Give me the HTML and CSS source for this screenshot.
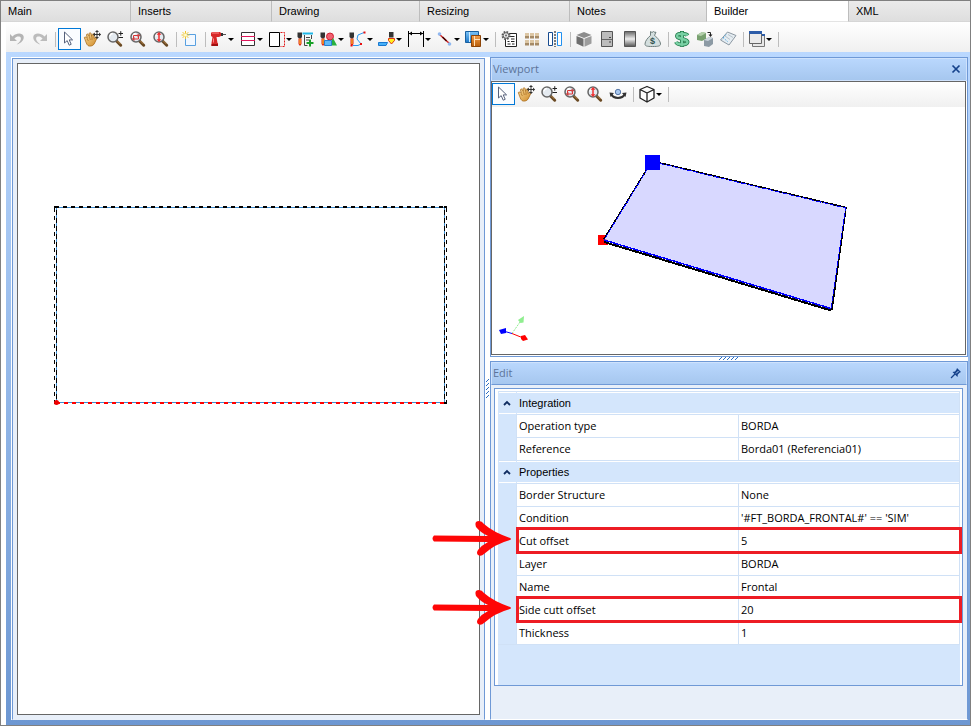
FILE: index.html
```html
<!DOCTYPE html>
<html lang="en">
<head>
<meta charset="utf-8">
<title>Builder</title>
<link rel="stylesheet" href="styles.css">
</head>
<body>
<svg class="defs" aria-hidden="true">
  <defs>
    <linearGradient id="steel" x1="0" y1="0" x2="0" y2="1"><stop offset="0" stop-color="#666"/><stop offset=".5" stop-color="#eee"/><stop offset="1" stop-color="#555"/></linearGradient>
    <linearGradient id="skin" x1="0" y1="0" x2="1" y2="1"><stop offset="0" stop-color="#f8dc9c"/><stop offset="1" stop-color="#d08a28"/></linearGradient>
    <linearGradient id="sky" x1="0" y1="0" x2="0" y2="1"><stop offset="0" stop-color="#7cc4f8"/><stop offset="1" stop-color="#1e78c8"/></linearGradient>
    <linearGradient id="amber" x1="0" y1="0" x2="0" y2="1"><stop offset="0" stop-color="#f4a04c"/><stop offset="1" stop-color="#b85c08"/></linearGradient>
  </defs>
  <symbol id="i-cursor" viewBox="0 0 20 20"><path d="M5.500 3v11l2.700-2.400 2 4.600 2-.9-2-4.400h3.400z" fill="#fff" stroke="#56617c"/></symbol>
  <symbol id="i-hand" viewBox="0 0 20 20"><path d="M2.300 8.500c.8-1 2-.3 3 .9L4.500 6c0-1.300 1.500-1.400 2 0l.8 1.500-.2-2.900c.2-1.200 1.700-1.100 2 0l.6 3 .6-2.200c.5-1 1.800-.8 1.800.4l-.1 3.700 1.500-1.300c1-.6 1.900.3 1.300 1.200l-2.100 4.500c-.9 2.200-2.800 3.300-5 3.200-2.800-.2-3.300-2.700-5.400-8.600z" fill="url(#skin)" stroke="#a86c1c" stroke-width=".8"/><path d="M5 10l1.500 2M7.500 8l.8 3M10 8v3" stroke="#a86c1c" stroke-width=".7"/><path d="M15 2v7M11.500 5.500h7" stroke="#333"/><path d="M15 1l2 2h-4zM15 10l2-2h-4zM19 5.500l-2-2v4zM11 5.500l2-2v4z" fill="#333"/></symbol>
  <symbol id="i-lens" viewBox="0 0 20 20"><path d="M11.500 12l4.200 4.200" stroke="#6a4a24" stroke-width="3" stroke-linecap="round"/><path d="M12.500 12l3 3" stroke="#b98a50"/><circle cx="8" cy="8" r="5" fill="#e4eaf0" stroke="#666" stroke-width="1.500"/><path d="M4.800 7.500a3.400 3.400 0 0 1 3-3" fill="none" stroke="#fff" stroke-width="1.300"/></symbol>
  <symbol id="i-zoom" viewBox="0 0 20 20"><use href="#i-lens"/><path d="M13.500 4.500h4.500M15.750 2.200v4.500M13.500 8.500h4.500" stroke="#222"/></symbol>
  <symbol id="i-zoomwin" viewBox="0 0 20 20"><use href="#i-lens"/><path d="M5.500 6.500h5v3.500h-5z" fill="none" stroke="#d33"/><path d="M3.500 10l3-2v4zM12.500 6.500l-3-2v4z" fill="#c44"/></symbol>
  <symbol id="i-zoomfit" viewBox="0 0 20 20"><use href="#i-lens"/><path d="M8 4v8" stroke="#f03030" stroke-width="1.500"/><path d="M8 3l2.500 2.700h-5zM8 13l2.500-2.700h-5z" fill="#f03030"/></symbol>
  <symbol id="i-bit" viewBox="0 0 20 20"><path d="M1.500 3.500H6V8L5 9.500H3L1.500 8z" fill="#333"/><path d="M2.500 9.500h3v5.500l-1.500 2-1.500-2z" fill="#e02010"/><path d="M3.500 10h1v5h-1z" fill="#ffe030"/></symbol>
</svg>

<div class="window">
  <nav class="tabs" aria-label="Sections">
    <button class="tab" type="button">Main</button>
    <button class="tab" type="button">Inserts</button>
    <button class="tab" type="button">Drawing</button>
    <button class="tab" type="button">Resizing</button>
    <button class="tab" type="button">Notes</button>
    <button class="tab tab-active" type="button" aria-current="page">Builder</button>
    <button class="tab" type="button">XML</button>
  </nav>

  <div class="toolbar" role="toolbar" aria-label="Builder tools">
    <button class="tool" type="button" aria-label="Undo"><svg class="icon" viewBox="0 0 20 20"><path d="M3 5v7h7l-2.600-2.500c2-2.500 5.600-2.600 6.400-.8.700 1.800-1 4.400-4.200 6.800 5-1.500 7.800-5 7-8.300C15.500 3.800 9.500 3.500 5.500 7.500z" fill="#b4b4b4"/></svg></button>
    <button class="tool" type="button" aria-label="Redo"><svg class="icon" viewBox="0 0 20 20"><path d="M17 5v7h-7l2.600-2.500c-2-2.500-5.600-2.600-6.400-.8-.7 1.800 1 4.400 4.200 6.800-5-1.500-7.800-5-7-8.300C4.500 3.800 10.500 3.500 14.500 7.500z" fill="#bcbcbc"/></svg></button>
    <span class="sep"></span>
    <button class="tool tool-on" type="button" aria-label="Select"><svg class="icon"><use href="#i-cursor"/></svg></button>
    <button class="tool" type="button" aria-label="Pan"><svg class="icon"><use href="#i-hand"/></svg></button>
    <button class="tool" type="button" aria-label="Zoom"><svg class="icon"><use href="#i-zoom"/></svg></button>
    <button class="tool" type="button" aria-label="Zoom window"><svg class="icon"><use href="#i-zoomwin"/></svg></button>
    <button class="tool" type="button" aria-label="Zoom to fit"><svg class="icon"><use href="#i-zoomfit"/></svg></button>
    <span class="sep"></span>
    <button class="tool" type="button" aria-label="New"><svg class="icon" viewBox="0 0 20 20"><path d="M5.500 5.500h10v11h-10z" fill="#f2f8ff" stroke="#58a0e0"/><path d="M5.500 2v8M1.500 6h8M2.700 3.200l5.600 5.600M8.300 3.200L2.700 8.800" stroke="#f0c428"/><circle cx="5.500" cy="6" r="1.500" fill="#fffbd0"/></svg></button>
    <span class="sep"></span>
    <button class="tool tool-drop" type="button" aria-label="Drill"><svg class="icon" viewBox="0 0 20 20"><path d="M2 4l1-1h8l1 1v3l-2 1H7.500l1 6H9v3H2.500v-3l1-6L2 7z" fill="#d62828"/><path d="M3 4h7M4.500 9.500v4" stroke="#f88"/><path d="M12 4h2v3h-2z" fill="#333"/><path d="M14 5.500h3" stroke="#555"/><path d="M2.500 15h6.500v2H2.500z" fill="#a01010"/></svg></button>
    <button class="tool tool-drop" type="button" aria-label="Panel"><svg class="icon" viewBox="0 0 20 20"><path d="M3.500 3.500h13v13h-13z" fill="#fff" stroke="#333"/><path d="M3 7.500h14M3 11.500h14" stroke="#e0185c"/></svg></button>
    <button class="tool tool-drop" type="button" aria-label="Edge"><svg class="icon" viewBox="0 0 20 20"><path d="M2.500 3.500h10v14h-10z" fill="#fff" stroke="#000"/><path d="M13.500 3.500h4v14h-4" fill="none" stroke="#e01818" stroke-dasharray="2 1"/></svg></button>
    <button class="tool" type="button" aria-label="Add operation"><svg class="icon" viewBox="0 0 20 20"><use href="#i-bit"/><path d="M6.500 4.500h10.500" stroke="#20b8e8" stroke-width="2"/><path d="M8.500 6v10.500h3M15.500 6v4M10 8.500h4M10 11h3" fill="none" stroke="#444"/><path d="M14 10.500v7M10.500 14h7" stroke="#18a028" stroke-width="2"/></svg></button>
    <button class="tool tool-drop" type="button" aria-label="Shapes"><svg class="icon" viewBox="0 0 20 20"><use href="#i-bit"/><circle cx="11" cy="7.500" r="3.500" fill="#f06070" stroke="#d02030"/><path d="M14 9l4 7.500H10z" fill="#28b040"/><path d="M5.500 11.500h7v5h-7z" fill="#60b8f8" stroke="#2880d0"/></svg></button>
    <button class="tool tool-drop" type="button" aria-label="Path"><svg class="icon" viewBox="0 0 20 20"><use href="#i-bit"/><path d="M5 16.500h5l3-1.500-4-5 1-4 6-2.500" fill="none" stroke="#2898f0"/><path d="M15.500 2.500h2v2h-2zM12 14h2v2h-2zM2.500 15.500h2v2h-2z" fill="#e81010"/></svg></button>
    <button class="tool tool-drop" type="button" aria-label="Groove"><svg class="icon" viewBox="0 0 20 20"><path d="M1.500 13.500h9l-1.500 3H1.500z" fill="#48b0f8" stroke="#1878d0"/><path d="M12 3h4.500v5.500H12z" fill="#333"/><path d="M11.500 9.500h6v2L14.500 15l-3-3.500z" fill="#fff020" stroke="#e03010"/></svg></button>
    <button class="tool tool-drop" type="button" aria-label="Dimension"><svg class="icon" viewBox="0 0 20 20"><path d="M2.500 2v16M17.500 2v16M3 4.500h14" stroke="#000"/><path d="M3 4.500l3-2v4zM17 4.500l-3-2v4z" fill="#000"/></svg></button>
    <button class="tool tool-drop" type="button" aria-label="Line"><svg class="icon" viewBox="0 0 20 20"><path d="M4 5l11 10" stroke="#d02020" stroke-width="1.400"/><path d="M7.500 8l4 4" stroke="#400" stroke-width="1.500"/><circle cx="4.500" cy="5" r="1.800" fill="#90b8f0"/><circle cx="14.500" cy="15" r="1.800" fill="#90b8f0"/></svg></button>
    <button class="tool tool-drop" type="button" aria-label="Modules"><svg class="icon" viewBox="0 0 20 20"><path d="M1.500 2.500h13v11h-13z" fill="url(#sky)" stroke="#1860a0"/><path d="M5.500 3v10" stroke="#d0ecff"/><path d="M7.500 6.500h9v11h-9z" fill="url(#amber)" stroke="#8c4408"/><path d="M10.500 7v10M11 10.500h5" stroke="#ffe0b8"/></svg></button>
    <span class="sep"></span>
    <button class="tool" type="button" aria-label="Settings list"><svg class="icon" viewBox="0 0 20 20"><path d="M6.500 4.500h11v13h-11z" fill="#fff" stroke="#222"/><path d="M10 7.500h5.500M8.500 12.500h2M12 12.500h3.500M8.500 15h3M13 15h2.500M12 10h3.500" stroke="#222"/><circle cx="7" cy="6.500" r="3.500" fill="#ddd" stroke="#555" stroke-width="2" stroke-dasharray="1.600 1.150"/><circle cx="7" cy="6.500" r="2.800" fill="#e8e8e8" stroke="#666"/><circle cx="7" cy="6.500" r="1" fill="#666"/></svg></button>
    <button class="tool" type="button" aria-label="Blocks"><svg class="icon" viewBox="0 0 20 20"><g fill="#dcc6a4"><path d="M3 4h4v5H3zM8 4h4v5H8zM13 4h4v5h-4zM3 11h4v5H3zM8 11h4v5H8zM13 11h4v5h-4z"/></g><g fill="#a58a66"><path d="M3 7h4v2.500H3zM8 7h4v2.500H8zM13 7h4v2.500h-4zM3 14h4v2.500H3zM8 14h4v2.500H8zM13 14h4v2.500h-4z"/></g></svg></button>
    <button class="tool" type="button" aria-label="Mirror"><svg class="icon" viewBox="0 0 20 20"><path d="M3.500 3.500h4v13h-4z" fill="#fff" stroke="#184c90"/><path d="M12.500 3.500h4v13h-4z" fill="#fff" stroke="#2090f0"/><path d="M10 2v16" stroke="#000" stroke-dasharray="2 1"/></svg></button>
    <span class="sep"></span>
    <button class="tool" type="button" aria-label="Box"><svg class="icon" viewBox="0 0 20 20"><path d="M10 3l7.500 3-7.500 3-7.500-3z" fill="#8c8c8c"/><path d="M2.500 7l7 2.800v8L2.500 14.500z" fill="#6e6e6e"/><path d="M17.500 7l-7 2.800v8l7-3.300z" fill="#9c9c9c"/></svg></button>
    <button class="tool" type="button" aria-label="Door"><svg class="icon" viewBox="0 0 20 20"><path d="M4.500 2.500h11v15h-11z" fill="#bcbcbc" stroke="#555"/><path d="M5 10.500h10" stroke="#666"/><path d="M12 8.500h2M12 13h2" stroke="#444"/></svg></button>
    <button class="tool" type="button" aria-label="Metal"><svg class="icon" viewBox="0 0 20 20"><path d="M4.500 2.500h11v15h-11z" fill="url(#steel)" stroke="#555"/></svg></button>
    <button class="tool" type="button" aria-label="Budget"><svg class="icon" viewBox="0 0 20 20"><path d="M7.500 2.500l1.500 1 1.500-1 1.500 1 1-.5-1.500 3.500c3 2 6 6 6 8.500 0 2-2 2.500-8 2.500s-7.500-.5-7.500-2.500c0-3 3-6.500 5.500-8.500z" fill="#d4dfdf" stroke="#71807f"/><text class="bag-text" x="7" y="15">$</text></svg></button>
    <span class="sep"></span>
    <button class="tool" type="button" aria-label="Price"><svg class="icon" viewBox="0 0 20 20"><path d="M15.500 6.500C14.500 4.800 5 3.500 5 7s10.500 2.500 10.500 6S5.500 16.300 4 13M10 2v16" fill="none" stroke="#207848" stroke-width="4"/><path d="M15.500 6.500C14.500 4.800 5 3.500 5 7s10.500 2.500 10.500 6S5.500 16.300 4 13M10 2.700v14.600" fill="none" stroke="#78d0a4" stroke-width="2.400"/></svg></button>
    <button class="tool" type="button" aria-label="Replace"><svg class="icon" viewBox="0 0 20 20"><path d="M2 6l5-3 4 1v6l-4 2-5-1z" fill="#78a070"/><path d="M2 6l4 1 5-3-4-1z" fill="#b4d0ac"/><path d="M9 11l5-3 4 1v6l-4 3-5-1z" fill="#8c9aa4"/><path d="M9 11l4 1 5-3-4-1z" fill="#ccd6de"/><path d="M12.500 3.500h3v3" fill="none" stroke="#222"/><path d="M13.500 5.500h4L15.500 8z" fill="#222"/></svg></button>
    <button class="tool" type="button" aria-label="Notes"><svg class="icon" viewBox="0 0 20 20"><path d="M9.500 3l8.500 3.500-7 9.500-8.500-5z" fill="#e6edf2" stroke="#8c98a2"/><path d="M7 7l5 3.500M10 5.500l5 3" stroke="#b8c4cc"/><path d="M5 8.500l5 4.500M8 5.500l-4 5" stroke="#50a8e0" stroke-dasharray="1.500 1.500"/></svg></button>
    <span class="sep"></span>
    <button class="tool tool-drop" type="button" aria-label="Windows"><svg class="icon" viewBox="0 0 20 20"><path d="M5.500 5.500h12v12h-12z" fill="#e8e8e8" stroke="#777"/><path d="M5 6h13" stroke="#2c5ca8" stroke-width="2"/><path d="M2.500 2.500h12v12h-12z" fill="#ebebeb" stroke="#666"/><path d="M2 3.500h13" stroke="#2c5ca8" stroke-width="3"/></svg></button>
    <span class="sep"></span>
  </div>

  <main class="dock">
    <div class="dock-grid">
      <section class="drawing-panel" aria-label="Drawing">
        <div class="drawing">
          <svg class="sheet" role="img" aria-label="Panel outline">
            <g fill="none" shape-rendering="crispEdges" transform="translate(-18 -64)">
              <path d="M56.500 402.500V207.500H444.500V402.500z" stroke="#3c8cd0"/>
              <path d="M55 207H447" stroke="#000" stroke-width="2" stroke-dasharray="4 4"/>
              <path d="M54.500 208V404M446.500 208V404" stroke="#000" stroke-dasharray="4 4"/>
              <path d="M56.500 210V404M444.500 210V404" stroke="#000" stroke-dasharray="5 3"/>
              <path d="M54 207h4M444 207h3M444 403h3" stroke="#000" stroke-width="2"/>
              <path d="M56 403H444" stroke="#f00" stroke-width="2" stroke-dasharray="4 4"/>
            </g>
            <circle cx="38.500" cy="338.500" r="2.500" fill="#e00"/>
          </svg>
        </div>
      </section>

      <div class="split split-v"><svg class="grip" width="4" height="19" viewBox="0 0 4 19"><path d="M0 3l3-3M0 7l3-3M0 11l3-3M0 15l3-3M0 19l3-3" stroke="#2a6cc0"/></svg></div>

      <div class="side">
        <section class="panel viewport" aria-labelledby="viewport-title">
          <header class="panel-head">
            <h2 id="viewport-title">Viewport</h2>
            <button class="head-btn" type="button" aria-label="Close"><svg viewBox="0 0 12 12"><path d="M2.500 2.500l7 7M9.500 2.500l-7 7" stroke="#15428b" stroke-width="1.700"/></svg></button>
          </header>
          <div class="view-body">
            <div class="toolbar toolbar-view" role="toolbar" aria-label="Viewport tools">
              <button class="tool tool-on" type="button" aria-label="Select"><svg class="icon"><use href="#i-cursor"/></svg></button>
              <button class="tool" type="button" aria-label="Pan"><svg class="icon"><use href="#i-hand"/></svg></button>
              <button class="tool" type="button" aria-label="Zoom"><svg class="icon"><use href="#i-zoom"/></svg></button>
              <button class="tool" type="button" aria-label="Zoom window"><svg class="icon"><use href="#i-zoomwin"/></svg></button>
              <button class="tool" type="button" aria-label="Zoom to fit"><svg class="icon"><use href="#i-zoomfit"/></svg></button>
              <button class="tool" type="button" aria-label="Orbit"><svg class="icon" viewBox="0 0 20 20"><path d="M3.500 10.500c2 4.500 11 4.500 13 0" fill="none" stroke="#333" stroke-width="2"/><path d="M1.500 8.500l4.500.5-3.500 4zM18.500 8.500l-4.500.5 3.500 4z" fill="#333"/><circle cx="10" cy="8" r="2.700" fill="#a8c8f0" stroke="#5878a8"/></svg></button>
              <span class="sep"></span>
              <button class="tool tool-drop" type="button" aria-label="View cube"><svg class="icon" viewBox="0 0 20 20"><path d="M10 2.500l7 3v8.500l-7 4-7-4V5.500zM3 5.500l7 3.500 7-3.500M10 9v9" fill="#fff" stroke="#222" stroke-width="1.300" stroke-linejoin="round"/></svg></button>
              <span class="sep"></span>
            </div>
            <svg class="scene" role="img" aria-label="3D view of the panel">
              <g transform="translate(-492 -107)">
                <path d="M598 235h10v10h-10z" fill="#f00"/>
                <path d="M604 239L652 161L846 207L832 309z" fill="#d8d8ff"/>
                <g fill="none" shape-rendering="crispEdges">
                  <path d="M604 242L831 310.500" stroke="#000" stroke-width="2"/>
                  <path d="M604 239L652 161L846 207.500L832 310" stroke="#000" stroke-width="1.500"/>
                  <path d="M604 240L831 308.500L845.500 208L652 161.500L604 240" stroke="#00f" stroke-dasharray="5 2"/>
                  <path d="M604 240L831 308.500" stroke="#00f" stroke-width="1.500"/>
                </g>
                <path d="M645 155h15v15h-15z" fill="#00f"/>
                <path d="M512 333.500L520 322" stroke="#90ee90" stroke-dasharray="2 1"/>
                <path d="M518 320l6-4-.5 6.500-3 .5z" fill="#90ee90"/>
                <path d="M512 333.500l-7-2" stroke="#00f"/>
                <path d="M499 330l7-2v5l-5 1z" fill="#00f"/>
                <path d="M512 333.500l10 4" stroke="#f00"/>
                <path d="M521 336l4-1 3 4.500-5 1.500-2-2z" fill="#f00"/>
              </g>
            </svg>
          </div>
        </section>

        <div class="split split-h"><svg class="grip" width="20" height="4" viewBox="0 0 20 4"><path d="M0 3l3-3M4 3l3-3M8 3l3-3M12 3l3-3M16 3l3-3" stroke="#2a6cc0"/></svg></div>

        <section class="panel edit" aria-labelledby="edit-title">
          <header class="panel-head panel-head-line">
            <h2 id="edit-title">Edit</h2>
            <button class="head-btn" type="button" aria-label="Pin"><svg viewBox="0 0 12 12"><path d="M7 1l4 4-1.500.7-1.700 1.800-.3 2.500L2.500 5 5 4.500 6.500 2.500z" fill="#15428b"/><path d="M1 11l4-4" stroke="#15428b" stroke-width="1.300"/><path d="M6 6.500l2.500-2.500" stroke="#b5d2fa"/></svg></button>
          </header>
          <div class="edit-body">
            <div class="grid-box">
              <table class="props">
                <colgroup><col class="col-strip"><col><col></colgroup>
                <tbody>
                  <tr class="cat"><td class="strip"><svg class="chev" viewBox="0 0 8 6"><path d="M1 5l3-3 3 3" fill="none" stroke="#102c60" stroke-width="1.800"/></svg></td><th colspan="2" scope="rowgroup">Integration</th></tr>
                  <tr><td class="strip"></td><th scope="row">Operation type</th><td>BORDA</td></tr>
                  <tr><td class="strip"></td><th scope="row">Reference</th><td>Borda01 (Referencia01)</td></tr>
                </tbody>
                <tbody>
                  <tr class="cat"><td class="strip"><svg class="chev" viewBox="0 0 8 6"><path d="M1 5l3-3 3 3" fill="none" stroke="#102c60" stroke-width="1.800"/></svg></td><th colspan="2" scope="rowgroup">Properties</th></tr>
                  <tr><td class="strip"></td><th scope="row">Border Structure</th><td>None</td></tr>
                  <tr><td class="strip"></td><th scope="row">Condition</th><td>'#FT_BORDA_FRONTAL#' == 'SIM'</td></tr>
                  <tr><td class="strip"><svg class="pointer" viewBox="0 0 84 40"><path d="M4 16.500L58 17Q51 14 46 8Q44 2 49 2Q52 2 54 5Q63 13 80 19Q82 20 80 21Q65 25 54 35Q51 38 48 36Q46 34 48 31Q52 26 58 23L4 22.500Q1 19.500 4 16.500z" fill="#fe0606"/></svg><span class="mark"></span></td><th scope="row">Cut offset</th><td>5</td></tr>
                  <tr><td class="strip"></td><th scope="row">Layer</th><td>BORDA</td></tr>
                  <tr><td class="strip"></td><th scope="row">Name</th><td>Frontal</td></tr>
                  <tr><td class="strip"><svg class="pointer" viewBox="0 0 84 40"><path d="M4 16.500L58 17Q51 14 46 8Q44 2 49 2Q52 2 54 5Q63 13 80 19Q82 20 80 21Q65 25 54 35Q51 38 48 36Q46 34 48 31Q52 26 58 23L4 22.500Q1 19.500 4 16.500z" fill="#fe0606"/></svg><span class="mark"></span></td><th scope="row">Side cutt offset</th><td>20</td></tr>
                  <tr><td class="strip"></td><th scope="row">Thickness</th><td>1</td></tr>
                </tbody>
              </table>
              <div class="grid-rest"></div>
            </div>
          </div>
        </section>
      </div>
    </div>
  </main>
</div>
</body>
</html>
```
FILE: styles.css
```css
:root {
  --line: #6f99d6;
  --pale: #e8eff9;
  --cell-line: #d0e1f6;
  --cell-fill: #d4e6fc;
  --frame: #666;
  --ui: "Open Sans", "Noto Sans", sans-serif;
}

* { box-sizing: border-box; }

body {
  margin: 0;
  background: #fff;
  color: #000;
  font: 11px/16px "Liberation Sans", Arial, sans-serif;
}

button {
  margin: 0;
  padding: 0;
  border: 0;
  background: none;
  font: inherit;
  color: inherit;
}

.defs {
  position: absolute;
  width: 0;
  height: 0;
}

.window {
  display: flex;
  flex-direction: column;
  height: 100vh;
  border: 1px solid #808080;
}

/* Tabs */
.tabs {
  display: grid;
  grid-template-columns: 130fr 141fr 148fr 150fr 137fr 142fr 121fr;
  height: 21px;
  flex: none;
}

.tab {
  padding: 0 7px;
  border-right: 1px solid #bdbdbd;
  border-bottom: 1px solid #d6d6d6;
  background: linear-gradient(#ebebeb, #dedede);
  text-align: left;
}

.tab:last-child { border-right: 0; }

.tab-active {
  background: #fff;
  border-bottom-color: #e4e4e4;
}

/* Toolbars */
.toolbar {
  display: flex;
  flex: none;
  margin-left: 5px;
  padding: 6px 0 2px;
  background: linear-gradient(#fff, #f0f0f0);
}

.toolbar-view {
  margin-left: 0;
  padding: 1px 0 2px;
}

.tool {
  position: relative;
  display: flex;
  flex: none;
  width: 23px;
  height: 22px;
  border: 1px solid transparent;
}

.tool-on {
  border-color: #0078d7;
  background: #fafcff;
}

.tool-drop { width: 29px; }

.tool-drop::after {
  content: "";
  align-self: center;
  margin-left: -1px;
  border: 3px solid transparent;
  border-top-color: #000;
  border-bottom: 0;
}

.icon {
  display: block;
  flex: none;
  width: 20px;
  height: 20px;
}

.bag-text {
  font: bold 9px "Liberation Sans", sans-serif;
  fill: #31534f;
}

.sep {
  flex: none;
  width: 1px;
  height: 15px;
  margin: 4px 2px 3px 3px;
  background: #bdbdbd;
}

/* Docking area */
.dock {
  display: flex;
  flex: 1;
  min-height: 0;
  margin-left: 5px;
  padding: 5px 2px 5px 5px;
  background: linear-gradient(#bad8ff, #6d97d2);
}

.dock-grid {
  display: grid;
  grid-template-columns: 475fr 4px 478fr;
  flex: 1;
  background: #fff;
}

.drawing-panel {
  display: flex;
  margin: 1px 1px 0 1px;
  padding: 4px;
  border: 1px solid var(--line);
  border-bottom-color: var(--pale);
  background: var(--pale);
}

.drawing {
  display: flex;
  flex: 1;
  border: 1px solid var(--frame);
  background: #fff;
}

.sheet,
.scene {
  display: block;
  flex: 1;
  width: 100%;
  min-height: 0;
}

.split {
  display: flex;
  align-items: center;
  justify-content: center;
  background: #fff;
}

.grip {
  display: block;
  flex: none;
}

.side {
  display: grid;
  grid-template-rows: 300fr 4px 359fr;
  min-height: 0;
}

.panel {
  display: flex;
  flex-direction: column;
  min-height: 0;
  border: 1px solid var(--line);
  background: #fff;
}

.panel-head {
  display: flex;
  align-items: center;
  justify-content: space-between;
  flex: none;
  height: 23px;
  padding: 0 4px 1px 1px;
  border: 1px solid #cfe2fc;
  background: linear-gradient(#b9d7fd, #a6c7ef);
}

.panel-head-line { border-bottom-color: var(--line); }

.panel-head h2 {
  margin: 0;
  font: 11px/16px var(--ui);
  color: #5d7499;
}

.head-btn {
  width: 12px;
  height: 12px;
}

.head-btn svg { display: block; }

.view-body {
  display: flex;
  flex-direction: column;
  flex: 1;
  min-height: 0;
  margin: 0 1px 1px 0;
  border: 1px solid var(--frame);
}

/* Property grid */
.edit { border-bottom-color: #fff; }

.edit-body {
  display: flex;
  flex: 1;
  padding: 3px 4px 33px 3px;
  background: var(--pale);
}

.grid-box {
  display: flex;
  flex-direction: column;
  flex: 1;
  padding: 2px 2px 0 3px;
  border: 1px solid var(--line);
  background: #fff;
}

.props {
  width: 100%;
  table-layout: fixed;
  border-collapse: separate;
  border-spacing: 0;
  font: 11px/16px var(--ui);
}

.col-strip { width: 18px; }

.props tr { position: relative; }

.props th,
.props td {
  height: 23px;
  padding: 0 0 0 2px;
  border-top: 1px solid var(--cell-line);
  border-left: 1px solid var(--cell-line);
  font-weight: normal;
  text-align: left;
  white-space: nowrap;
}

.props th + td,
.cat th { border-right: 1px solid var(--cell-line); }

.props .strip {
  padding: 0;
  border-color: var(--cell-fill);
  background: var(--cell-fill);
}

.props .cat th,
.props .cat .strip {
  border-left-color: var(--cell-fill);
  border-top-color: var(--cell-line);
  background: linear-gradient(#fff 1px, var(--cell-fill) 1px 21px, #fff 21px);
}

.props .cat th {
  font: 11px/16px "Liberation Sans", Arial, sans-serif;
}

.chev {
  display: block;
  width: 8px;
  height: 6px;
  margin: 0 auto 0 4px;
}

.grid-rest {
  flex: 1;
  border-top: 1px solid var(--cell-line);
  background: var(--cell-fill);
}

/* Callouts over the highlighted rows */
.mark {
  position: absolute;
  z-index: 1;
  inset: -2px -2px -2px 18px;
  border: 3px solid #ed1c24;
}

.pointer {
  position: absolute;
  z-index: 1;
  left: -68px;
  top: -10px;
  width: 84px;
  height: 40px;
}
```
